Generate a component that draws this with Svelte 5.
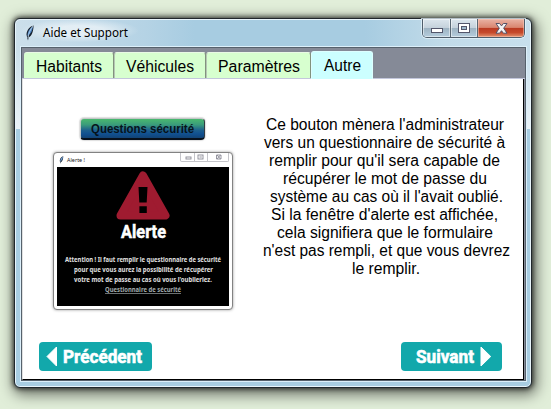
<script>
  const tabs = [
    { label: 'Habitants', box: 90, text: 66, off: 12 },
    { label: 'Véhicules', box: 92, text: 68, off: 11 },
    { label: 'Paramètres', box: 105, text: 82, off: 11 },
    { label: 'Autre', box: 62, text: 37, off: 12, active: true }
  ];
  const help = [
    ["Ce bouton mènera l'administrateur", 238, 0],
    ['vers un questionnaire de sécurité à', 241, 0],
    ["remplir pour qu'il sera capable de", 231, 0],
    ['récupérer le mot de passe du', 204, 0],
    ["système au cas où il l'avait oublié.", 233, 3],
    ["Si la fenêtre d'alerte est affichée,", 227, 0],
    ['cela signifiera que le formulaire', 216, 0],
    ["n'est pas rempli, et que vous devrez", 247, 4],
    ['le remplir.', 68, 3]
  ];
  const alertLines = [
    ['Attention ! Il faut remplir le questionnaire de sécurité', 156],
    ['pour que vous aurez la possibilité de récupérer', 139],
    ["votre mot de passe au cas où vous l'oublieriez.", 138]
  ];
</script>

{#snippet fit(text, width, height, baseline, cls)}
  <svg class="fit {cls}" {width} {height}>
    <text x="0" y={baseline} textLength={width} lengthAdjust="spacingAndGlyphs">{text}</text>
  </svg>
{/snippet}

{#snippet feather(w, h)}
  <svg class="feather" width={w} height={h} viewBox="0 0 10 16">
    <path d="M8.6.5C5 1.2 1.8 4.8 1.5 9.5L2 12 3 15.5 3.6 12.6C7 11 8.4 6 8.6.5Z" fill="#17202c" />
    <path d="M7.9 1.5C4.8 3.2 2.6 6 2.4 11 6 8.8 7.6 5.5 7.9 1.5Z" fill="#4f86c4" />
    <path d="M8 1C5 5 3.6 8 3 13" fill="none" stroke="#c9def0" stroke-width=".8" />
  </svg>
{/snippet}

<div class="desktop">
  <div class="window">
    <header>
      <div class="caption">
        {@render feather(10, 16)}
        {@render fit('Aide et Support', 85, 18, 13, 'title')}
      </div>
      <div class="controls">
        <span class="min"><svg width="12" height="6"><rect x=".5" y=".5" width="11" height="4" fill="#fff" stroke="#53566b" /></svg></span>
        <span class="max"><svg width="12" height="10"><rect x=".5" y=".5" width="11" height="9" fill="#fff" stroke="#53566b" /><rect x="3.5" y="3.5" width="5" height="3" fill="#9fb9cc" stroke="#53566b" /></svg></span>
        <span class="close"><svg width="13" height="11" viewBox="0 0 13 11"><path d="M1 .5H4.6L6.5 2.9 8.4.5H12L8.7 5.2 12 10.2H8.4L6.5 7.7 4.6 10.2H1L4.3 5.2Z" fill="#f4f4f4" stroke="#555368" /></svg></span>
      </div>
    </header>
    <main>
      <nav>
        {#each tabs as tab}
          <div class="tab" class:active={tab.active} style="width:{tab.box}px;padding-left:{tab.off}px">
            {@render fit(tab.label, tab.text, 22, 18, 'label')}
          </div>
        {/each}
      </nav>
      <section class="pane">
        <div class="columns">
          <div class="left">
            <div class="question">{@render fit('Questions sécurité', 103, 16, 12, 'qtext')}</div>
            <div class="alert">
              <div class="alerttop">
                {@render feather(5, 8)}
                {@render fit('Alerte !', 18, 9, 7, 'mini')}
                <div class="minicontrols">
                  <svg width="49" height="9" viewBox="0 0 49 9">
                    <path d="M13.5 0V8M26.5 0V8" stroke="#c5c5ca" />
                    <g fill="none" stroke="#8b8b96" stroke-width=".9">
                      <rect x="5" y="4" width="5" height="2" />
                      <rect x="17" y="2" width="5" height="4" /><path d="M18.5 4H20.8" />
                      <path d="M35.5 2H40V6H35.5ZM36 2L39.5 6M39.5 2L36 6" />
                    </g>
                  </svg>
                </div>
              </div>
              <div class="alertbody">
                <svg class="warn" width="54" height="49" viewBox="0 0 54 49">
                  <path d="M27 4.5L49.5 44.5H4.5Z" fill="#9f1b30" stroke="#9f1b30" stroke-width="8" stroke-linejoin="round" />
                  <path d="M22.5 16H31.5L30.7 31.5H23.3ZM23.4 35.3H30.8V42H23.4Z" fill="#000" />
                </svg>
                {@render fit('Alerte', 45, 20, 18, 'big')}
                <div class="lines">
                  {#each alertLines as [text, width]}
                    {@render fit(text, width, 10, 7, 'tiny')}
                  {/each}
                  {@render fit('Questionnaire de sécurité', 76, 10, 7, 'tiny link')}
                </div>
              </div>
            </div>
          </div>
          <div class="help">
            {#each help as [text, width, shift]}
              <div class="row" style="padding-left:{shift}px">{@render fit(text, width, 18, 15, 'label')}</div>
            {/each}
          </div>
        </div>
        <footer>
          <div class="btn prev">
            <svg width="12" height="21"><path d="M10.5 1V20L1 10.5Z" fill="#fff" stroke="#fff" stroke-linejoin="round" /></svg>
            {@render fit('Précédent', 79, 22, 17, 'btext')}
          </div>
          <div class="btn next">
            {@render fit('Suivant', 58, 22, 17, 'btext')}
            <svg width="12" height="21"><path d="M1 1V20L10.7 10.5Z" fill="#fff" stroke="#fff" stroke-linejoin="round" /></svg>
          </div>
        </footer>
      </section>
    </main>
  </div>
</div>

<style>
  :global(body) { margin: 0; }
  * { box-sizing: border-box; }
  svg { display: block; flex: none; }
  .desktop {
    width: 551px; height: 409px; padding: 18px 0 0 14px; overflow: hidden;
    background: #e1eed9;
  }
  .window {
    width: 518px; height: 370px; padding: 0 6px; border: 1px solid #20272c; border-radius: 6px;
    background:
      linear-gradient(rgba(240,246,250,0) 30px, rgba(240,246,250,.85) 110px) 0 0 / 100% 110px no-repeat,
      linear-gradient(90deg, #ccdfeb 0, #b5d3e5 130px, #a7cce1 180px, #a7cce1 350px, #c2dbe9 430px, #c7dfed 100%) 0 0 / 100% 110px no-repeat,
      #a8cde2;
    box-shadow: inset 0 0 0 1px #e8f4fb, 0 0 5px 1px rgba(0,0,0,.7), 2px 4px 14px 3px rgba(0,0,0,.5);
  }
  header { height: 28px; display: flex; justify-content: space-between; align-items: flex-start; }
  .caption {
    display: flex; gap: 8px; align-items: center; padding: 5px 10px 0 4px; height: 23px;
    background: radial-gradient(ellipse at center, rgba(255,255,255,.55) 30%, rgba(255,255,255,0) 72%);
  }
  .fit { overflow: visible; }
  .title { font: 12px "Noto Sans", sans-serif; fill: #000; }
  .controls {
    display: flex; height: 19px; width: 103px; border: 1px solid #505e6b; border-top: 0;
    border-radius: 0 0 5px 5px; overflow: hidden; box-shadow: 0 0 0 1px rgba(230,244,252,.75);
  }
  .controls span {
    display: flex; justify-content: center; box-shadow: inset 0 0 0 1px rgba(255,255,255,.5);
    background: linear-gradient(#dce6ed 0, #c5d2dc 48%, #9db2c1 50%, #b5cddd 100%);
  }
  .controls .min { width: 28px; padding-top: 9px; border-right: 1px solid #596773; }
  .controls .max { width: 27px; padding-top: 4px; border-right: 1px solid #596773; }
  .controls .close {
    width: 46px; padding-top: 4px;
    background: linear-gradient(#e9b3a5 0, #d98670 47%, #b93a22 50%, #c6492b 75%, #e19370 100%);
    box-shadow: inset 0 0 0 1px rgba(255,205,190,.5);
  }
  main { height: 334px; width: 505px; border: 1px solid #56616c; background: #858a97; box-shadow: 0 0 0 1px #dceffa; }
  nav { height: 31px; padding-left: 2px; display: flex; align-items: flex-end; border-bottom: 1px solid #c3c7dc; }
  .tab {
    height: 26px; padding-top: 1px; background: #d7ffcf; border-right: 1px solid #82927e;
    border-top: 1px solid #e9fae5; border-radius: 3px 3px 0 0;
  }
  .tab:nth-child(n+2) { border-left: 1px solid #b6c7b4; }
  .tab.active { height: 28px; background: #ccffff; border-color: #dff; margin-bottom: -1px; }
  .label { font: 16px "Liberation Sans", Arial, sans-serif; fill: #000; }
  .pane { height: 301px; width: 502px; background: #fff; border-right: 1px solid #000; border-bottom: 1px solid #000; border-left: 1px solid #e1e1e1; }
  .columns { display: flex; height: 263px; }
  .left { width: 227px; padding: 39px 0 0 30px; }
  .question {
    margin-left: 27px; width: 125px; height: 22px; padding: 2px 0 0 10px; border-radius: 4px;
    border: 1px solid #c3c8c7; border-right: 1px solid #303b42; border-bottom: 2px solid #07101c;
    background: linear-gradient(#4ab86f 0, #3a9c7b 30%, #1c5e8e 60%, #104f90 80%, #124374 100%);
    box-shadow: 0 0 1px 1px rgba(190,190,190,.5);
  }
  .qtext { font: bold 12px "Liberation Sans", Arial, sans-serif; fill: #06131c; }
  .alert {
    margin-top: 12px; width: 180px; height: 158px; border: 1px solid #828282; border-radius: 4px;
    padding: 0 3px; background: #fff; box-shadow: 0 0 3px #999;
  }
  .alerttop { height: 14px; display: flex; align-items: flex-start; padding-left: 2px; }
  .alerttop > :global(.feather) { margin-top: 3px; }
  .mini { margin: 2px 0 0 3px; font: 6px "Noto Sans", sans-serif; fill: #222; }
  .minicontrols { margin-left: auto; width: 49px; height: 9px; border: 1px solid #c5c5ca; border-top: 0; border-radius: 0 0 2px 2px; }
  .alertbody { width: 172px; height: 139px; background: #000; display: flex; flex-direction: column; align-items: center; padding-top: 4px; }
  .big { font: bold 18px Roboto, sans-serif; fill: #fff; stroke: #fff; stroke-width: .5px; }
  .lines { display: flex; flex-direction: column; align-items: center; margin-top: 15px; }
  .tiny { font: bold 6.6px "Noto Sans", sans-serif; fill: #e0e0e0; }
  .link { fill: #a3acae; text-decoration: underline; }
  .help { width: 269px; padding: 36px 0 0 0; }
  .row { height: 18px; display: flex; justify-content: center; }
  footer { display: flex; justify-content: space-between; padding: 0 21px 0 16px; }
  .btn { height: 29px; background: #12a8ab; border-radius: 4px; display: flex; padding-top: 4px; }
  .prev { width: 113px; padding-left: 7px; gap: 5px; }
  .next { width: 101px; padding-left: 15px; gap: 6px; }
  .btext { font: bold 18px Roboto, sans-serif; fill: #fff; stroke: #fff; stroke-width: .6px; }
</style>
